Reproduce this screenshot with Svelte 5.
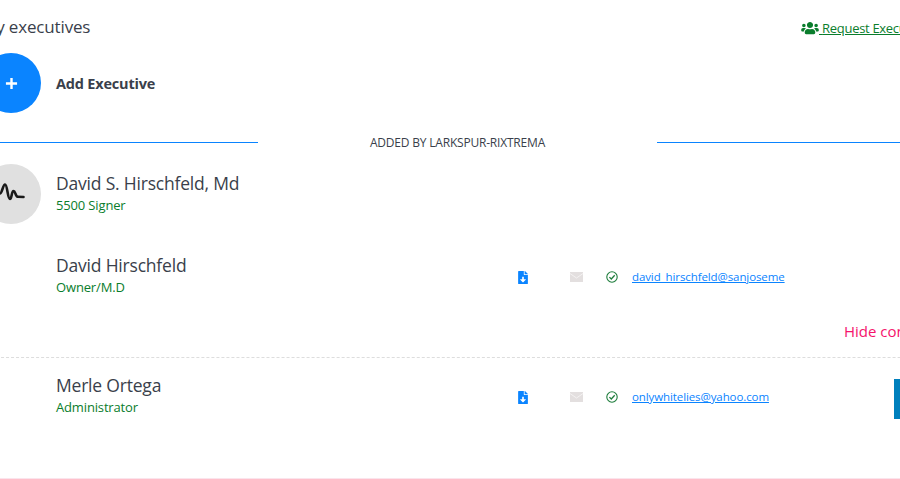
<script lang="ts">
  const contacts = [
    { name: 'David Hirschfeld', role: 'Owner/M.D', email: 'david_hirschfeld@sanjoseme', hide: true },
    { name: 'Merle Ortega', role: 'Administrator', email: 'onlywhitelies@yahoo.com', hide: false }
  ];
</script>

<div class="page">
  <div class="inner">
    <header class="top">
      <h2>My executives</h2>
      <a class="request" href="#request">
        <svg class="users" viewBox="0 0 640 512"><path d="M96 224c35.3 0 64-28.7 64-64s-28.7-64-64-64-64 28.7-64 64 28.7 64 64 64zm448 0c35.3 0 64-28.7 64-64s-28.7-64-64-64-64 28.7-64 64 28.7 64 64 64zm32 32h-64c-17.6 0-33.5 7.1-45.1 18.6 40.3 22.1 68.9 62 75.1 109.4h66c17.7 0 32-14.3 32-32v-32c0-35.3-28.7-64-64-64zm-256 0c61.9 0 112-50.1 112-112S381.9 32 320 32 208 82.1 208 144s50.1 112 112 112zm76.8 32h-8.3c-20.8 10-43.9 16-68.5 16s-47.6-6-68.5-16h-8.3C179.6 288 128 339.6 128 403.2V432c0 26.5 21.5 48 48 48h288c26.5 0 48-21.5 48-48v-28.8c0-63.6-51.6-115.2-115.2-115.2zm-223.7-13.4C161.5 263.1 145.6 256 128 256H64c-35.3 0-64 28.7-64 64v32c0 17.7 14.3 32 32 32h65.9c6.3-47.4 34.9-87.3 75.2-109.4z"/></svg>
        <span> Request Executive</span>
      </a>
    </header>

    <div class="add">
      <div class="circle blue">
        <svg viewBox="0 0 14 14" width="13" height="13"><path d="M7 1v12M1 7h12" stroke="#fff" stroke-width="2.6"/></svg>
      </div>
      <strong>Add Executive</strong>
    </div>

    <div class="divider">
      <span class="line left"></span>
      <span class="label">ADDED BY LARKSPUR-RIXTREMA</span>
      <span class="line right"></span>
    </div>

    <div class="signer">
      <div class="circle grey">
        <svg viewBox="0 0 28 24" width="28" height="24"><path d="M3 11.500C5 11.500 6 2.500 8 2.500 10.500 2.500 10.500 17 13 17 14.800 17 14.500 9 16.500 9 18.500 9 18.500 14.800 21 14.800L26.500 15" fill="none" stroke="#1a1a1a" stroke-width="2.600" stroke-linecap="round" stroke-linejoin="round"/></svg>
      </div>
      <div class="who">
        <div class="name">David S. Hirschfeld, Md</div>
        <div class="role">5500 Signer</div>
      </div>
    </div>

    {#each contacts as c}
      <div class="contact" class:first={c.hide}>
        <div class="who">
          <div class="name">{c.name}</div>
          <div class="role">{c.role}</div>
        </div>
        <svg class="doc" viewBox="0 0 384 512"><path d="M224 136V0H24C10.7 0 0 10.7 0 24v464c0 13.3 10.700 24 24 24h336c13.3 0 24-10.700 24-24V160H248c-13.200 0-24-10.800-24-24zm76.450 211.360l-96.420 95.700c-6.650 6.610-17.390 6.610-24.040 0l-96.420-95.700C73.420 337.290 80.540 320 94.820 320H160v-80c0-8.840 7.160-16 16-16h32c8.840 0 16 7.160 16 16v80h65.180c14.280 0 21.400 17.290 11.270 27.360zM377 105L279.100 7c-4.500-4.500-10.600-7-17-7H256v128h128v-6.100c0-6.300-2.500-12.400-7-16.900z"/></svg>
        <svg class="mail" viewBox="0 0 13 10"><rect width="13" height="10" fill="#e3dfdf"/><path d="M0 1.500L6.500 6 13 1.500" fill="none" stroke="#f4f2f2" stroke-width="1"/></svg>
        <svg class="check" viewBox="0 0 12 12"><circle cx="6" cy="6" r="5.200" fill="none" stroke="#1e7d3c" stroke-width="1.100"/><path d="M3.400 6.100L5.300 8 8.700 4.300" fill="none" stroke="#1e7d3c" stroke-width="1.300"/></svg>
        <a class="email" href="#mail">{c.email}</a>
        {#if !c.hide}<span class="edit"></span>{/if}
      </div>
      {#if c.hide}
        <div class="hide-row"><span>Hide contacts</span></div>
      {/if}
    {/each}

    <div class="bottom"></div>
  </div>
</div>

<style>
  :global(body) {
    margin: 0;
    background: #fff;
  }
  .page {
    width: 900px;
    height: 479px;
    overflow: hidden;
    font-family: "Open Sans", "Noto Sans", sans-serif;
    color: #3a3f4b;
  }
  .inner {
    width: 1160px;
    margin-left: -19px;
  }
  .top {
    display: flex;
    justify-content: space-between;
    height: 53px;
    box-sizing: border-box;
    padding-top: 16px;
  }
  h2 {
    margin: 0;
    font-size: 17px;
    line-height: 22px;
    font-weight: 500;
    letter-spacing: -0.150px;
  }
  .request {
    width: 340px;
    flex: none;
    color: #0a7d2c;
    font-size: 13px;
    line-height: 24px;
    letter-spacing: -0.300px;
    white-space: nowrap;
    text-decoration: underline;
  }
  .users {
    width: 18px;
    height: 14px;
    fill: #0a7d2c;
    vertical-align: -2px;
  }
  .circle {
    width: 60px;
    height: 60px;
    border-radius: 50%;
    flex: none;
    display: flex;
    align-items: center;
    justify-content: center;
  }
  .blue {
    background: #0a84ff;
  }
  .grey {
    background: #e0e0e0;
  }
  .add {
    display: flex;
    align-items: center;
    gap: 15px;
    height: 60px;
  }
  .add strong {
    font-size: 14.500px;
    letter-spacing: -0.200px;
    font-weight: 700;
  }
  .divider {
    display: flex;
    align-items: center;
    height: 1px;
    margin-top: 29px;
    margin-bottom: 21px;
  }
  .line {
    height: 1px;
    background: #0a84ff;
    flex: none;
  }
  .line.left {
    width: 277px;
  }
  .line.right {
    width: 300px;
  }
  .label {
    width: 399px;
    flex: none;
    text-align: center;
    font-size: 12px;
    letter-spacing: -0.200px;
    white-space: nowrap;
  }
  .signer {
    display: flex;
    align-items: center;
    gap: 15px;
    height: 60px;
  }
  .signer .who {
    margin-top: -2px;
  }
  .who {
    width: 461px;
    flex: none;
  }
  .name {
    font-size: 17.500px;
    line-height: 24px;
    letter-spacing: -0.200px;
  }
  .role {
    font-size: 13px;
    line-height: 20px;
    color: #0a7d2c;
    letter-spacing: -0.150px;
  }
  .contact {
    display: flex;
    align-items: center;
    height: 44px;
    padding-left: 75px;
    margin-top: 15px;
  }
  .contact.first {
    margin-top: 29px;
  }
  .doc {
    width: 10px;
    height: 13px;
    fill: #0a84ff;
    flex: none;
    margin-top: 4px;
    margin-left: 1px;
  }
  .mail {
    width: 13px;
    height: 10px;
    flex: none;
    margin-left: 42px;
    margin-top: 3px;
  }
  .check {
    width: 12px;
    height: 12px;
    flex: none;
    margin-left: 23px;
    margin-top: 3px;
  }
  .email {
    margin-left: 14px;
    margin-top: 3px;
    font-size: 11.500px;
    color: #0a84ff;
    letter-spacing: -0.100px;
    white-space: nowrap;
    width: 262px;
    flex: none;
  }
  .edit {
    width: 40px;
    height: 40px;
    background: #0080bd;
    flex: none;
    margin-top: 8px;
  }
  .hide-row {
    height: 61px;
    padding-left: 863px;
    padding-top: 23px;
    box-sizing: border-box;
    font-size: 15px;
    line-height: 22px;
    color: #f5136b;
    border-bottom: 1px dashed #ddd;
    white-space: nowrap;
  }
  .bottom {
    height: 1px;
    margin-top: 61px;
    background: #fbe4ec;
  }
</style>
